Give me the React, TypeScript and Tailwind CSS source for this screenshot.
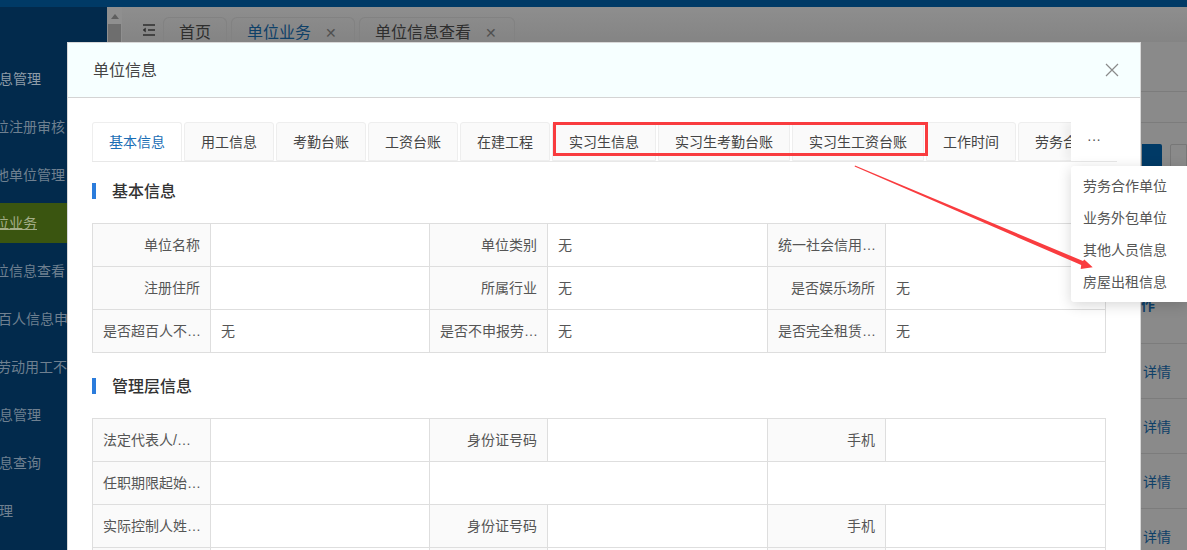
import React from "react";

const FONT = "font-['Liberation_Sans','Noto_Sans_CJK_SC',sans-serif]";

const side = [
  { t: "信息管理", c: "ml-[-15px] text-[#8f9ca8]" },
  { t: "单位注册审核", c: "ml-[-19px] text-[#6f8090]" },
  { t: "其他单位管理", c: "ml-[-19px] text-[#6f8090]" },
  { t: "单位业务", c: "ml-[-19px] text-[#a3ad86] underline", active: true },
  { t: "单位信息查看", c: "ml-[-19px] text-[#6f8090]" },
  { t: "超百人信息申报", c: "ml-[-16px] text-[#6f8090]" },
  { t: "非劳动用工不规范", c: "ml-[-17px] text-[#6f8090]" },
  { t: "信息管理", c: "ml-[-15px] text-[#6f8090]" },
  { t: "信息查询", c: "ml-[-15px] text-[#6f8090]" },
  { t: "管理", c: "ml-[-15px] text-[#6f8090]" },
];

const tabs = ["基本信息", "用工信息", "考勤台账", "工资台账", "在建工程", "实习生信息", "实习生考勤台账", "实习生工资台账", "工作时间", "劳务合作单位"];

function Label({ children, cut }: { children: React.ReactNode; cut?: boolean }) {
  return (
    <td className={`border border-[#dedede] bg-[#fafafa] pl-[10px] text-[#555] truncate ${cut ? "pr-[7px] text-left" : "pr-[10px] text-right"}`}>{children}</td>
  );
}
function Val({ children, span }: { children?: React.ReactNode; span?: number }) {
  return (
    <td colSpan={span} className="border border-[#dedede] px-[10px] text-left text-[#555] truncate">{children}</td>
  );
}

function Cols() {
  return (
    <colgroup>
      <col className="w-[118px]" />
      <col className="w-[219px]" />
      <col className="w-[118px]" />
      <col className="w-[220px]" />
      <col className="w-[118px]" />
      <col className="w-[220px]" />
    </colgroup>
  );
}

function Title({ children }: { children: React.ReactNode }) {
  return (
    <div className="flex items-center h-[16px]">
      <span className="w-[4px] h-[16px] bg-[#2b7cdc]" />
      <span className="ml-[16px] text-[16px] font-medium text-[#333] leading-[16px] translate-y-[1px]">{children}</span>
    </div>
  );
}

export default function App() {
  return (
    <div className={`relative w-[1187px] h-[550px] overflow-hidden bg-[#8a8a8a] ${FONT}`}>
      {/* underlying page */}
      <div className="h-[7px] bg-[#003a66]" />
      <div className="flex h-[543px]">
        <aside className="w-[107px] bg-[#022a4c] pt-[52px] flex flex-col gap-[8px] overflow-hidden shrink-0">
          {side.map((s, i) => (
            <div key={i} className={`h-[40px] shrink-0 flex items-center text-[14px] whitespace-nowrap ${s.active ? "bg-[#3a5510]" : ""}`}>
              <span className={s.c}>{s.t}</span>
            </div>
          ))}
        </aside>
        <div className="w-[15px] bg-[#8f8f8f] shrink-0 flex flex-col items-center pt-[7px]">
          <span className="w-0 h-0 border-x-[4px] border-x-transparent border-b-[5px] border-b-[#5f5f5f]" />
          <span className="mt-[5px] w-[13px] h-[40px] bg-[#6e6e6e]" />
        </div>
        <main className="flex-1 min-w-0 overflow-hidden">
          <div className="flex items-end h-[35px] pl-[20px] gap-[4px] bg-gradient-to-b from-[#8e8e8e] to-[#848484]">
            <svg width="14" height="14" viewBox="0 0 14 14" className="self-center mt-[10px] mr-[3px] text-[#2e2e2e]" fill="none" stroke="currentColor" strokeWidth="1.5">
              <path d="M1 2H13M6 7H13M1 12H13" />
              <path d="M3.5 5L1 7L3.5 9Z" fill="currentColor" strokeWidth="0.5" />
            </svg>
            <div className="w-[64px] h-[25px] rounded-t-[6px] border border-b-0 border-[#828282] text-[16px] leading-[24px] text-[#2e2e2e] flex justify-center pt-[3px]">首页</div>
            <div className="w-[124px] h-[25px] rounded-t-[6px] border border-b-0 border-[#828282] text-[16px] leading-[24px] text-[#0e4068] flex items-start pt-[3px] pl-[15px]">
              单位业务<span className="ml-[14px] text-[#505050] text-[14px]">✕</span>
            </div>
            <div className="w-[156px] h-[25px] rounded-t-[6px] border border-b-0 border-[#828282] text-[16px] leading-[24px] text-[#2e2e2e] flex items-start pt-[3px] pl-[15px]">
              单位信息查看<span className="ml-[14px] text-[#505050] text-[14px]">✕</span>
            </div>
          </div>
        </main>
      </div>

      {/* background right strip, seen past the dialog */}
      <div className="absolute left-[1141px] top-[91px] w-[46px] border-t border-[#7c7c7c]" />
      <div className="absolute left-[1141px] top-[122px] w-[46px] border-t border-[#7c7c7c]" />
      <div className="absolute left-[1142px] top-[144px] w-[20px] h-[24px] rounded-r-[2px] bg-[#003a66]" />
      <div className="absolute left-[1170px] top-[144px] w-[17px] h-[24px] rounded-l-[2px] border border-[#777]" />
      <div className="absolute left-[1141px] top-[295px] text-[14px] font-bold text-[#0e4068]">作</div>
      {["top-[362px]", "top-[417px]", "top-[472px]", "top-[527px]"].map((c) => (
        <div key={c} className={`absolute left-[1143px] text-[14px] text-[#0e4068] ${c}`}>详情</div>
      ))}
      {["top-[343px]", "top-[398px]", "top-[453px]", "top-[508px]"].map((c) => (
        <div key={c} className={`absolute left-[1141px] w-[46px] border-t border-[#7c7c7c] ${c}`} />
      ))}

      {/* dialog */}
      <div className="absolute left-[67px] top-[42px] w-[1074px] h-[600px] bg-white border border-[#d8d8d8] border-b-0">
        <div className="h-[55px] bg-[#f6ffff] border-b border-[#d4d4d4] flex items-center justify-between pl-[25px] pr-[21px]">
          <span className="text-[16px] text-[#444] translate-y-[1px]">单位信息</span>
          <svg width="14" height="14" viewBox="0 0 14 14" fill="none" stroke="#8a8a8a" strokeWidth="1.2">
            <path d="M1 1L13 13M13 1L1 13" />
          </svg>
        </div>
        <div className="pl-[24px] pr-[24px]">
          <div className="mt-[24px] w-[1025px] h-[40px] border-b border-[#e8e8e8] flex gap-[2px] overflow-hidden">
            {tabs.map((t, i) => (
              <div
                key={t}
                className={`h-[39px] shrink-0 px-[16px] pt-[1px] flex items-center text-[14px] border border-[#eeeeee] rounded-t-[3px] whitespace-nowrap ${
                  i === 0 ? "bg-white text-[#1a6eb5] h-[40px] border-b-white" : "bg-[#fafafa] text-[#444]"
                }`}
              >
                {t}
              </div>
            ))}
          </div>
          <div className="mt-[21px]"><Title>基本信息</Title></div>
          <table className="mt-[24px] w-[1014px] table-fixed border-collapse text-[14px]">
            <Cols />
            <tbody className="[&_tr]:h-[43px]">
              <tr><Label>单位名称</Label><Val /><Label>单位类别</Label><Val>无</Val><Label cut>统一社会信用代码</Label><Val /></tr>
              <tr><Label>注册住所</Label><Val /><Label>所属行业</Label><Val>无</Val><Label>是否娱乐场所</Label><Val>无</Val></tr>
              <tr><Label cut>是否超百人不申报</Label><Val>无</Val><Label cut>是否不申报劳务派遣</Label><Val>无</Val><Label cut>是否完全租赁场地</Label><Val>无</Val></tr>
            </tbody>
          </table>
          <div className="mt-[25px]"><Title>管理层信息</Title></div>
          <table className="mt-[24px] w-[1014px] table-fixed border-collapse text-[14px]">
            <Cols />
            <tbody className="[&_tr]:h-[43px]">
              <tr><Label cut>法定代表人/负责人</Label><Val /><Label>身份证号码</Label><Val /><Label>手机</Label><Val /></tr>
              <tr><Label cut>任职期限起始日期</Label><Val /><Val span={2} /><Val span={2} /></tr>
              <tr><Label cut>实际控制人姓名或名称</Label><Val /><Label>身份证号码</Label><Val /><Label>手机</Label><Val /></tr>
              <tr><Label> </Label><Val /><Label> </Label><Val /><Label> </Label><Val /></tr>
            </tbody>
          </table>
        </div>
      </div>

      {/* more tabs button + menu */}
      <div className="absolute left-[1071px] top-[122px] w-[46px] h-[39px] bg-white shadow-[-6px_0_8px_rgba(0,0,0,0.05)] [clip-path:inset(0_0_0_-14px)] flex items-center justify-center text-[14px] text-[#555] pb-[4px]">···</div>
      <div className="absolute left-[1071px] top-[166px] w-[116px] h-[136px] bg-white rounded-l-[3px] shadow-[0_3px_14px_rgba(0,0,0,0.16)] flex flex-col pt-[4px] pl-[12px] text-[14px] text-[#555]">
        {["劳务合作单位", "业务外包单位", "其他人员信息", "房屋出租信息"].map((t) => (
          <div key={t} className="h-[32px] flex items-center whitespace-nowrap">{t}</div>
        ))}
      </div>

      {/* red annotation */}
      <div className="absolute left-[553px] top-[122px] w-[375px] h-[34px] border-[3px] border-[#f93c3f]" />
      <svg className="absolute left-0 top-0 pointer-events-none" width="1187" height="550" viewBox="0 0 1187 550">
        <polygon points="855,165.6 1083,261 1084.3,259.5 1092.7,267.3 1080.7,269 1081.2,265 854.6,166.5" fill="#f93c3f" />
      </svg>
    </div>
  );
}
